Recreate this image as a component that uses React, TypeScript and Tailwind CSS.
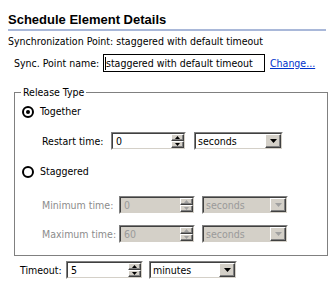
import React from 'react';

function UpTri({ color }: { color: string }) {
  return (
    <svg width="5" height="3" viewBox="0 0 5 3" className="block">
      <polygon points="2.5,0 5,3 0,3" fill={color} />
    </svg>
  );
}
function DownTri({ color, w = 5, h = 3 }: { color: string; w?: number; h?: number }) {
  return (
    <svg width={w} height={h} viewBox={`0 0 ${w} ${h}`} className="block">
      <polygon points={`0,0 ${w},0 ${w / 2},${h}`} fill={color} />
    </svg>
  );
}

const raised =
  'border border-t-white border-l-white border-b-[#404040] border-r-[#404040] bg-[#d4d0c8] shadow-[inset_-1px_-1px_#808080] flex items-center justify-center';

function Spin({ value, w, disabled }: { value: string; w: string; disabled?: boolean }) {
  const tri = disabled ? '#a0a0a0' : '#000000';
  return (
    <div className={`h-[18px] shrink-0 ${w} border border-t-[#808080] border-l-[#808080] border-b-white border-r-white`}>
      <div
        className={`h-full flex border border-t-[#404040] border-l-[#404040] border-b-[#d4d0c8] border-r-[#d4d0c8] ${
          disabled ? 'bg-[#d4d0c8]' : 'bg-white'
        }`}
      >
        <div className={`flex-1 pl-[3px] leading-[14px] ${disabled ? 'text-[#9a9a9a]' : 'text-black'}`}>{value}</div>
        <div className="w-[13px] flex flex-col">
          <div className={`h-[7px] ${raised}`}>
            <UpTri color={tri} />
          </div>
          <div className={`h-[7px] ${raised}`}>
            <DownTri color={tri} />
          </div>
        </div>
      </div>
    </div>
  );
}

function Combo({ value, w, disabled }: { value: string; w: string; disabled?: boolean }) {
  const tri = disabled ? '#a0a0a0' : '#000000';
  return (
    <div className={`h-[18px] shrink-0 ${w} border border-t-[#808080] border-l-[#808080] border-b-white border-r-white`}>
      <div
        className={`h-full flex border border-t-[#404040] border-l-[#404040] border-b-[#d4d0c8] border-r-[#d4d0c8] ${
          disabled ? 'bg-[#d4d0c8]' : 'bg-white'
        }`}
      >
        <div className={`flex-1 pl-[2px] leading-[14px] ${disabled ? 'text-[#9a9a9a]' : 'text-black'}`}>{value}</div>
        <div className={`w-[16px] h-full ${raised}`}>
          <DownTri color={tri} w={7} h={4} />
        </div>
      </div>
    </div>
  );
}

function Radio({ checked, label }: { checked?: boolean; label: string }) {
  return (
    <div className="flex items-center h-[13px]">
      <svg width="12" height="12" viewBox="0 0 12 12" className="block">
        <circle cx="6" cy="6" r="5" fill="white" stroke="black" strokeWidth="2" />
        {checked && <circle cx="6" cy="6" r="2" fill="black" />}
      </svg>
      <span className="ml-[6px] leading-[13px]">{label}</span>
    </div>
  );
}

export default function App() {
  return (
    <div className="w-[333px] h-[304px] bg-white text-black text-[10.5px] leading-[13px] font-['DejaVu_Sans_Condensed','Liberation_Sans',sans-serif] pl-[8px] overflow-hidden whitespace-nowrap">
      <div className="pt-[12px] h-[29px] text-[13px] leading-[16px] font-bold font-['Liberation_Sans',sans-serif]">
        Schedule Element Details
      </div>
      <div className="h-[2px] w-[318px] bg-[#a9b8d9]" />
      <div className="mt-[4px] h-[13px] leading-[13px]">Synchronization Point: staggered with default timeout</div>
      <div className="mt-[6px] ml-[6px] flex items-center h-[18px]">
        <div className="w-[89px] shrink-0">Sync. Point name:</div>
        <div className="w-[162px] shrink-0 h-[18px] border border-black flex items-center pl-[1px]">
          <span className="w-px h-[13px] bg-black -mr-[1px]" />
          <span className="pl-[1px]">staggered with default timeout</span>
        </div>
        <a className="ml-[5px] text-[#0033cc] underline underline-offset-1">Change...</a>
      </div>

      <fieldset className="mt-[14px] ml-[6px] w-[314px] border border-[#808080] pl-[7px] pb-[12px]">
        <legend className="ml-[-1px] px-[2px] leading-[13px]">Release Type</legend>
        <div className="mt-[6px]">
          <Radio checked label="Together" />
        </div>
        <div className="mt-[14px] ml-[20px] flex items-center">
          <div className="w-[69px] shrink-0">Restart time:</div>
          <Spin value="0" w="w-[75px]" />
          <div className="ml-[8px]">
            <Combo value="seconds" w="w-[89px]" />
          </div>
        </div>
        <div className="mt-[15px]">
          <Radio label="Staggered" />
        </div>
        <div className="mt-[18px] ml-[20px] flex items-center text-[#8c8c8c]">
          <div className="w-[77px] shrink-0">Minimum time:</div>
          <Spin value="0" w="w-[76px]" disabled />
          <div className="ml-[7px]">
            <Combo value="seconds" w="w-[86px]" disabled />
          </div>
        </div>
        <div className="mt-[11px] ml-[20px] flex items-center text-[#8c8c8c]">
          <div className="w-[77px] shrink-0">Maximum time:</div>
          <Spin value="60" w="w-[76px]" disabled />
          <div className="ml-[7px]">
            <Combo value="seconds" w="w-[86px]" disabled />
          </div>
        </div>
      </fieldset>

      <div className="mt-[5px] ml-[12px] flex items-center">
        <div className="w-[46px] shrink-0">Timeout:</div>
        <Spin value="5" w="w-[77px]" />
        <div className="ml-[6px]">
          <Combo value="minutes" w="w-[88px]" />
        </div>
      </div>
    </div>
  );
}
